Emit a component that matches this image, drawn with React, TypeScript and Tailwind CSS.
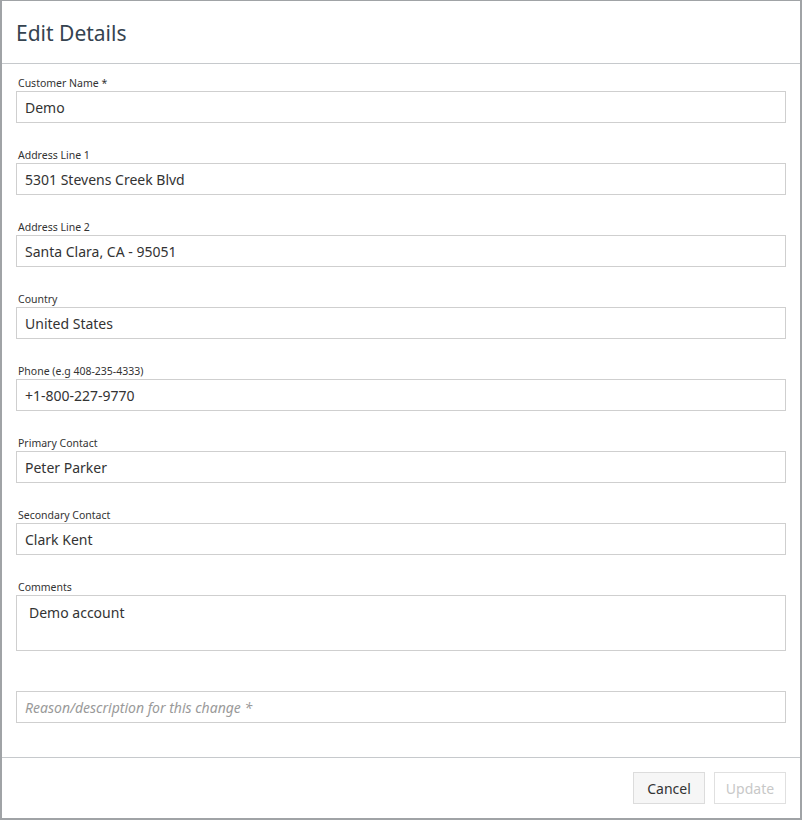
import React from "react";

const fields: { label: string; value: string }[] = [
  { label: "Customer Name *", value: "Demo" },
  { label: "Address Line 1", value: "5301 Stevens Creek Blvd" },
  { label: "Address Line 2", value: "Santa Clara, CA - 95051" },
  { label: "Country", value: "United States" },
  { label: "Phone (e.g 408-235-4333)", value: "+1-800-227-9770" },
  { label: "Primary Contact", value: "Peter Parker" },
  { label: "Secondary Contact", value: "Clark Kent" },
];

export default function App() {
  return (
    <div
      className="w-[802px] h-[820px] bg-[#a0a3a6] pt-[1px] px-[2px] pb-[2px]"
      style={{ fontFamily: '"Noto Sans", "Open Sans", sans-serif' }}
    >
      <div className="bg-white h-full flex flex-col">
        <div className="h-[63px] border-b border-[#c6c9cc] flex items-center px-[14px] shrink-0">
          <h1 className="text-[21px] text-[#354350] leading-none mt-[2px]">Edit Details</h1>
        </div>
        <div className="flex-1 px-[14px] pt-[11px]">
          {fields.map((f) => (
            <div key={f.label} className="mb-[24px]">
              <div className="text-[10.5px] leading-[15px] text-[#333] pt-[1px] pl-[2px]">{f.label}</div>
              <input
                readOnly
                value={f.value}
                className="w-full h-[32px] border border-[#cfcfcf] px-[8px] text-[14px] text-[#333] outline-none"
              />
            </div>
          ))}
          <div>
            <div className="text-[10.5px] leading-[15px] text-[#333] pt-[1px] pl-[2px]">Comments</div>
            <textarea
              readOnly
              value="Demo account"
              className="block w-full h-[56px] border border-[#cfcfcf] px-[12px] pt-[7px] text-[14px] leading-[20px] text-[#333] resize-none outline-none"
            />
          </div>
          <input
            placeholder="Reason/description for this change *"
            className="mt-[40px] w-full h-[32px] border border-[#cfcfcf] px-[8px] text-[14px] text-[#333] italic placeholder:text-[#9a9a9a] outline-none"
          />
        </div>
        <div className="h-[61px] border-t border-[#c6c9cc] flex items-center justify-end gap-[9px] px-[14px] shrink-0">
          <button className="w-[72px] h-[32px] bg-[#f6f6f6] border border-[#dcdcdc] text-[14px] text-[#333]">
            Cancel
          </button>
          <button className="w-[72px] h-[32px] bg-white border border-[#e0e0e0] text-[14px] text-[#c8c8c8]">
            Update
          </button>
        </div>
      </div>
    </div>
  );
}
